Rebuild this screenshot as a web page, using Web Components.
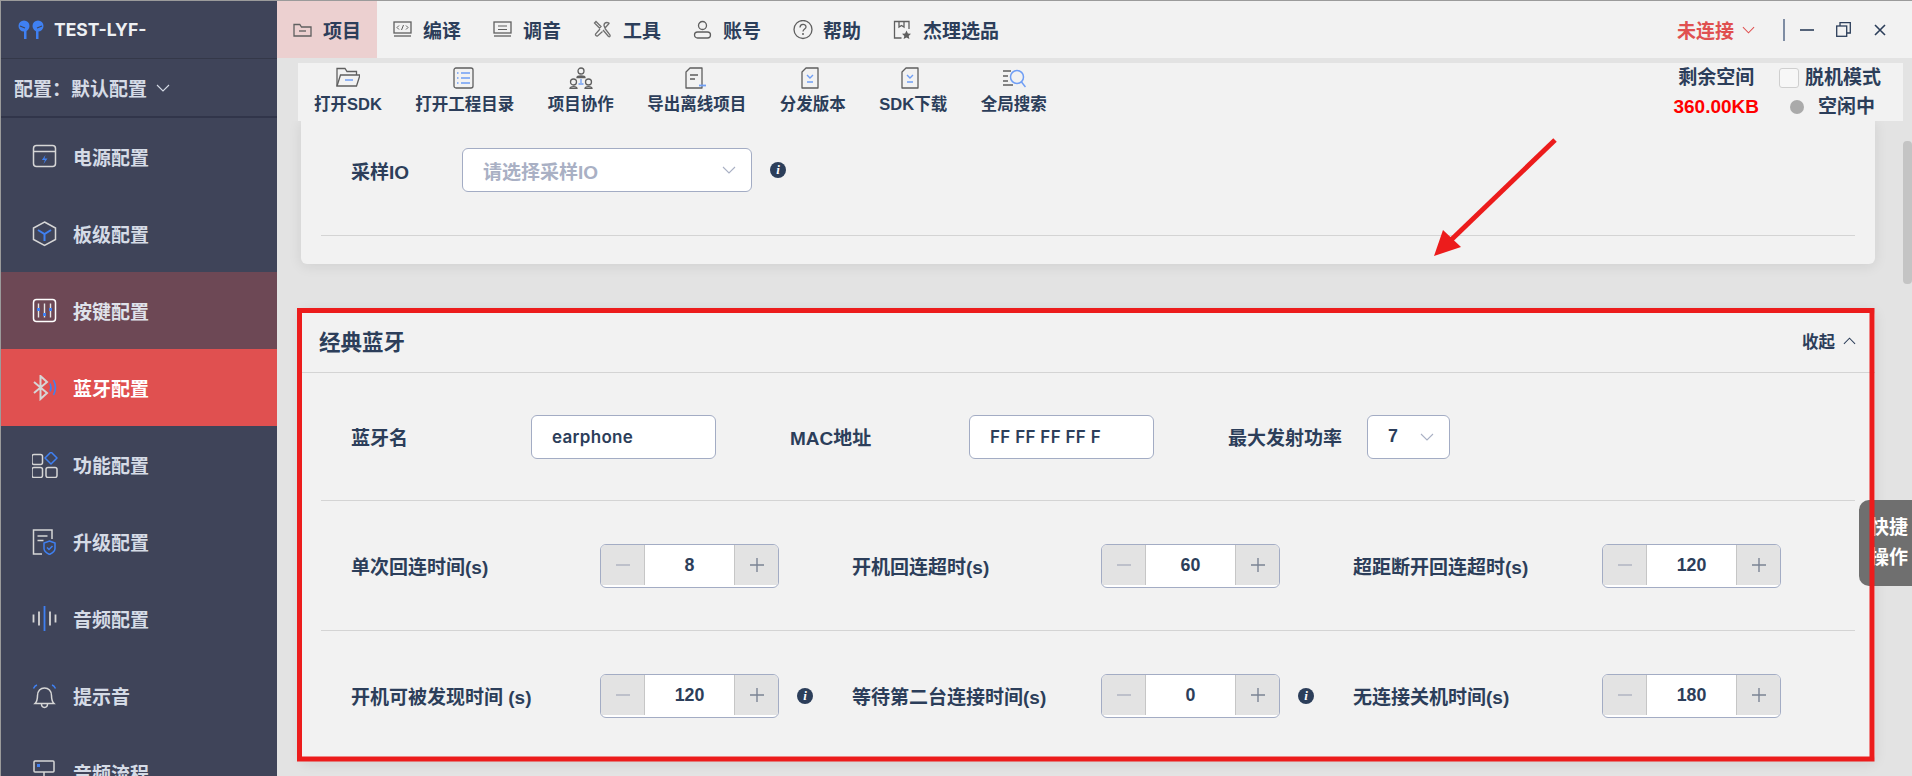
<!DOCTYPE html>
<html lang="zh-CN">
<head>
<meta charset="utf-8">
<title>TEST-LYF-</title>
<style>
  html, body { margin: 0; height: 100%; overflow: hidden; background: #e3e3e3; }
  body { font-family: "Liberation Sans", "Noto Sans CJK SC", sans-serif; color: #2c3e5a; }
</style>
</head>
<body>
<app-shell>
  <side-bar slot="side">
    <side-item icon="power">电源配置</side-item>
    <side-item icon="board">板级配置</side-item>
    <side-item icon="keys" state="hover">按键配置</side-item>
    <side-item icon="bluetooth" state="active">蓝牙配置</side-item>
    <side-item icon="func">功能配置</side-item>
    <side-item icon="upgrade">升级配置</side-item>
    <side-item icon="audio">音频配置</side-item>
    <side-item icon="bell">提示音</side-item>
    <side-item icon="flow" more>音频流程</side-item>
  </side-bar>

  <top-nav slot="top">
    <nav-tab icon="folder" active>项目</nav-tab>
    <nav-tab icon="code">编译</nav-tab>
    <nav-tab icon="tune">调音</nav-tab>
    <nav-tab icon="tools">工具</nav-tab>
    <nav-tab icon="user">账号</nav-tab>
    <nav-tab icon="help">帮助</nav-tab>
    <nav-tab icon="store">杰理选品</nav-tab>
  </top-nav>

  <tool-bar slot="tools">
    <tool-btn icon="open">打开SDK</tool-btn>
    <tool-btn icon="list">打开工程目录</tool-btn>
    <tool-btn icon="team">项目协作</tool-btn>
    <tool-btn icon="export">导出离线项目</tool-btn>
    <tool-btn icon="dist">分发版本</tool-btn>
    <tool-btn icon="dist">SDK下载</tool-btn>
    <tool-btn icon="search">全局搜索</tool-btn>
  </tool-bar>

  <work-area slot="work">
    <config-card cut>
      <form-row first-pad>
        <form-field label="采样IO" width="111"><select-box width="290" placeholder="请选择采样IO"></select-box><info-dot></info-dot></form-field>
      </form-row>
    </config-card>
    <config-card title="经典蓝牙">
      <form-row h="128" cols="439px 438px auto">
        <form-field label="蓝牙名" width="180"><text-box width="185">earphone</text-box></form-field>
        <form-field label="MAC地址" width="179"><text-box width="185">FF FF FF FF F</text-box></form-field>
        <form-field label="最大发射功率" width="139"><select-box width="83" value="7"></select-box></form-field>
      </form-row>
      <form-row>
        <form-field label="单次回连时间(s)" width="249"><num-stepper value="8"></num-stepper></form-field>
        <form-field label="开机回连超时(s)" width="249"><num-stepper value="60"></num-stepper></form-field>
        <form-field label="超距断开回连超时(s)" width="249"><num-stepper value="120"></num-stepper></form-field>
      </form-row>
      <form-row>
        <form-field label="开机可被发现时间 (s)" width="249"><num-stepper value="120"></num-stepper><info-dot></info-dot></form-field>
        <form-field label="等待第二台连接时间(s)" width="249"><num-stepper value="0"></num-stepper><info-dot></info-dot></form-field>
        <form-field label="无连接关机时间(s)" width="249"><num-stepper value="180"></num-stepper></form-field>
      </form-row>
    </config-card>
  </work-area>

  <quick-tab slot="over"></quick-tab>
  <red-markup slot="over"></red-markup>
</app-shell>

<script>
// stroke colours used by the two tone icons
const W = '#d6d6d6'
const B = '#3f80f2'
const G = '#5f5f5f'
const L = '#6f9ef5'

const sideIcons = {
  power: `<rect x="1.5" y="1.5" width="22" height="21" rx="3" stroke="${W}"/><path d="M1.5 7.5h22" stroke="${W}"/><path d="M13.5 11l-3.6 5h3l-1.4 4 4-5.4h-3z" fill="${B}"/>`,
  board: `<path d="M12.5 1L23.5 7v11.5L12.5 24.5 1.5 18.5V7z" stroke="${W}"/><path d="M6 9l6.5 4 6.5-4M12.5 13v7" stroke="${B}" stroke-width="2"/>`,
  keys: `<rect x="1.5" y="1.5" width="22" height="22" rx="3" stroke="#fff"/><path d="M6.5 5.5v14M12.5 5.5v14M18.5 5.5v14" stroke="#e6e6e6" stroke-width="1.4"/><rect x="5" y="10" width="3" height="3" fill="${B}"/><rect x="11" y="15" width="3" height="3" fill="${B}"/><rect x="17" y="10" width="3" height="3" fill="${B}"/>`,
  bluetooth: `<path d="M2 7l13 11-6.5 6V1L15 7 2 18" stroke="${W}" stroke-width="2"/><path d="M18 8.5c1.4 2.800 1.400 5.200 0 8" stroke="${B}" stroke-width="1.6"/><path d="M21.500 5c2.600 5 2.600 10 0 15" stroke="${B}" stroke-width="1.6"/>`,
  func: `<rect x="0" y="2.500" width="10.500" height="10" rx="2" stroke="${W}"/><path d="M19 0l6 6-6 6-6-6z" stroke="${B}" stroke-linejoin="round"/><rect x="0" y="15.500" width="10.500" height="10" rx="2" stroke="${W}"/><rect x="14" y="15.500" width="11" height="10" rx="2" stroke="${W}"/>`,
  upgrade: `<path d="M10 25H1.500V1H20v9" stroke="${W}"/><path d="M5.500 7h10M5.500 11.500h6" stroke="${W}"/><path d="M17.500 12l5.500 2v5.500c0 2.500-2.500 4.500-5.500 6-3-1.500-5.500-3.500-5.500-6V14z" stroke="${B}"/><path d="M15 18.500l2 2 3.500-3.500" stroke="${B}"/>`,
  audio: `<path d="M1.500 8.500v8M7 5.500v14M18 5.500v14M23.500 8.500v8" stroke="${W}" stroke-width="1.800"/><path d="M12.500 0v25" stroke="${B}" stroke-width="1.800"/>`,
  bell: `<path d="M3 20.500c2-2 2.500-4 2.500-8 0-4.500 3-7.500 7-7.500s7 3 7 7.500c0 4 .5 6 2.500 8z" stroke="${W}"/><path d="M9.500 21c0 4.500 6 4.500 6 0" stroke="${W}"/><path d="M1.500 5.500C2.500 3.500 3.500 2.500 5 2M20 2c1.500.5 2.500 1.500 3.500 3.500" stroke="${B}"/>`,
  flow: `<rect x="2" y="1" width="20" height="11" rx="1" stroke="${W}"/><rect x="5" y="4" width="3" height="3" fill="${B}"/><path d="M12 12v6M3 18.500h18" stroke="${W}"/>`
}

const topIcons = {
  folder: `<path d="M1 4.500V16h17V7H8.500L6.800 4.500z" stroke="${G}"/><path d="M6 11h7" stroke="${G}"/>`,
  code: `<rect x="1" y="2" width="17" height="11" stroke="${G}"/><path d="M6 5.500l-2 2 2 2M13 5.500l2 2-2 2M10.500 5l-2 5" stroke="${G}" stroke-width="1"/><path d="M1 16h17" stroke="${G}"/>`,
  tune: `<rect x="1" y="2" width="17" height="11" stroke="${G}"/><path d="M5 6h9M5 9.500h9" stroke="${G}" stroke-width="1"/><path d="M1 16h17" stroke="${G}"/>`,
  tools: `<path d="M3 1.500l5 5-1.500 1.500-5-5zM7 9l-4.500 5c-.5 1 1 2.500 2 2L9.500 11.500M12 8l4-4.500c.5-.5-1-1-2-1-2 0-3 1.500-3 3zM10 10l5.500 6.500c1 .8 2-.2 1.500-1.500L12 8.500" stroke="#707070"/>`,
  user: `<circle cx="9.500" cy="5.500" r="4" stroke="${G}"/><rect x="1.500" y="12" width="16" height="6" rx="3" stroke="${G}"/>`,
  help: `<circle cx="10" cy="9.500" r="9" stroke="${G}"/><path d="M7 7.500c0-4 6-4 6-.5 0 2-3 2-3 4.500" stroke="${G}"/><circle cx="10" cy="14" r="1" fill="${G}"/>`,
  store: `<path d="M16 9V1.500H1.500V18h7" stroke="${G}"/><path d="M6 1.500V7l2.500-1.500L11 7V1.500" stroke="${G}"/><path d="M13.500 10.500l1.400 3 3.100.3-2.300 2.100.7 3.100-2.900-1.600-2.900 1.600.7-3.100-2.300-2.100 3.100-.3z" fill="${G}"/>`
}

const toolIcons = {
  open: `<path d="M1 19V1.500h8l2 3h9.500V8" stroke="${G}"/><path d="M1 19L4.500 8H24l-3.500 11z" stroke="${G}"/><path d="M9 13h8" stroke="${L}" stroke-width="1.500"/>`,
  list: `<rect x="1" y="1" width="19" height="20" rx="2" stroke="${G}"/><path d="M8 6h9M8 11h9M8 16h9" stroke="${L}"/><path d="M4 6h1.500M4 11h1.500M4 16h1.500" stroke="${L}" stroke-width="1.400"/>`,
  team: `<circle cx="12" cy="4" r="3" stroke="${G}"/><path d="M8 10.500c0-2 8-2 8 0z" stroke="${G}"/><circle cx="4.500" cy="15" r="3" stroke="${G}"/><path d="M1 21.500c0-2.500 7-2.500 7 0z" stroke="${G}"/><circle cx="19.500" cy="15" r="3" stroke="${G}"/><path d="M16 21.500c0-2.500 7-2.500 7 0z" stroke="${G}"/><path d="M12 12v4M9.500 17h5" stroke="${L}"/>`,
  export: `<path d="M5 1h12v20H1V5z" stroke="${G}" stroke-linejoin="round"/><path d="M5 8h8M5 12h5" stroke="${G}"/><path d="M14 18.500h7" stroke="${L}" stroke-width="1.800"/>`,
  dist: `<path d="M5 1h12v20H1V5z" stroke="${G}" stroke-linejoin="round"/><path d="M6 8l3 3 3-3M6 15h6" stroke="${L}" stroke-width="1.400"/>`,
  search: `<path d="M1 4h8M1 9h5M1 14h5M1 18h10" stroke="${G}"/><circle cx="15" cy="10" r="6.500" stroke="${L}" stroke-width="1.500"/><path d="M19.500 15l4 5" stroke="${L}" stroke-width="1.500"/>`
}

const chevron = (size, color, up) => `<svg width="${size}" height="${Math.round(size * .6)}" viewBox="0 0 14 8" fill="none"><path d="${up ? 'M1 7l6-6 6 6' : 'M1 1l6 6 6-6'}" stroke="${color}" stroke-width="1.100"/></svg>`

class AppShell extends HTMLElement {
  constructor() {
    super()
    this.attachShadow({mode: 'open'})
    this.shadowRoot.innerHTML = `
    <style>
      :host { display: grid; grid-template-columns: 276px 1fr; grid-template-rows: 58px 4px 58px 1fr;
        width: 1912px; height: 776px; overflow: hidden; position: relative; background: #e3e3e3;
        border-top: 1px solid #9b9b9b; border-left: 1px solid #9b9b9b; box-sizing: border-box; }
      ::slotted([slot=side]) { grid-row: 1 / 5; }
      ::slotted([slot=top]) { grid-column: 2; grid-row: 1; }
      ::slotted([slot=tools]) { grid-column: 2; grid-row: 3; margin: 0 9px 0 21px; }
      ::slotted([slot=work]) { grid-column: 2; grid-row: 4; min-height: 0; }
    </style>
    <slot name="side"></slot><slot name="top"></slot><slot name="tools"></slot><slot name="work"></slot><slot name="over"></slot>`
  }
}

class SideBar extends HTMLElement {
  constructor() {
    super()
    this.attachShadow({mode: 'open'})
    this.shadowRoot.innerHTML = `
    <style>
      :host { display: block; background: #3f4459; color: #d5dbe6; overflow: hidden; font-weight: 700; font-size: 19px; min-height: 0; }
      .brand { height: 57px; display: flex; align-items: center; gap: 9px; padding-left: 17px; border-bottom: 1px solid #343849; color: #eef0f3; font: 700 17.5px Inter, "Liberation Sans", sans-serif; }
      .conf { height: 57px; display: flex; align-items: center; padding-left: 13px; gap: 9px; border-bottom: 2px solid #31354a; }
    </style>
    <div class="brand">
      <svg width="27" height="20" viewBox="0 0 27 20"><circle cx="6" cy="6" r="5.500" fill="#3f80f2"/><circle cx="20" cy="6" r="5.500" fill="#3f80f2"/><rect x="6" y="8" width="2.500" height="11" fill="#3f80f2"/><rect x="18" y="8" width="2.500" height="11" fill="#3f80f2"/><path d="M2 6l5 2M24 6l-5 2" stroke="#3f4459" stroke-width="1.200"/></svg>
      <span>TEST-LYF-</span>
    </div>
    <div class="conf"><span>配置：默认配置</span>${chevron(14, '#d5dbe6')}</div>
    <slot></slot>`
  }
}

class SideItem extends HTMLElement {
  constructor() {
    super()
    this.attachShadow({mode: 'open'})
    const more = this.hasAttribute('more') ? `<span class="more">${chevron(14, '#e8e8e8')}</span>` : ''
    this.shadowRoot.innerHTML = `
    <style>
      :host { display: flex; align-items: center; height: 77px; padding-left: 31px; gap: 15px; position: relative; }
      :host([state=hover]) { background: #6d4855; color: #dfe2ea; }
      :host([state=active]) { background: #e05050; color: #fff; }
      svg.i { width: 26px; height: 26px; fill: none; stroke-width: 1.500; flex: none; }
      .more { position: absolute; right: 9px; top: 34px; }
    </style>
    <svg class="i" viewBox="0 0 26 26">${sideIcons[this.getAttribute('icon')]}</svg><slot></slot>${more}`
  }
}

class TopNav extends HTMLElement {
  constructor() {
    super()
    this.attachShadow({mode: 'open'})
    this.shadowRoot.innerHTML = `
    <style>
      :host { display: flex; background: #f2f2f2; height: 57px; align-items: stretch; }
      .right { margin-left: auto; display: flex; align-items: center; padding-right: 25px; }
      .st { color: #e05050; font-weight: 700; font-size: 19px; display: flex; align-items: center; gap: 8px; }
      .sep { width: 2px; height: 22px; background: #7f8da3; margin: 0 15px 0 28px; }
      .win { display: flex; align-items: center; gap: 22px; }
      svg { display: block; }
    </style>
    <slot></slot>
    <div class="right">
      <div class="st">未连接${chevron(13, '#e05050')}</div>
      <div class="sep"></div>
      <div class="win">
        <svg width="14" height="14" viewBox="0 0 14 14"><path d="M0 7h14" stroke="#2c3e5a" stroke-width="1.600"/></svg>
        <svg width="15" height="15" viewBox="0 0 15 15" fill="none" stroke="#2c3e5a" stroke-width="1.300"><rect x=".7" y="4" width="10" height="10.300"/><path d="M4 4V.7h10.300V11H11"/></svg>
        <svg width="14" height="14" viewBox="0 0 14 14"><path d="M2 2l10 10M12 2L2 12" stroke="#2c3e5a" stroke-width="1.600"/></svg>
      </div>
    </div>`
  }
}

class NavTab extends HTMLElement {
  constructor() {
    super()
    this.attachShadow({mode: 'open'})
    this.shadowRoot.innerHTML = `
    <style>
      :host { display: flex; align-items: center; gap: 10px; padding: 0 16px; width: auto; font-weight: 700; font-size: 19px; color: #2c3e5a; }
      :host([active]) { background: #ecd0d0; }
      svg { width: 20px; height: 20px; fill: none; stroke-width: 1.300; flex: none; }
    </style>
    <svg viewBox="0 0 20 20">${topIcons[this.getAttribute('icon')]}</svg><slot></slot>`
  }
}

class ToolBar extends HTMLElement {
  constructor() {
    super()
    this.attachShadow({mode: 'open'})
    this.shadowRoot.innerHTML = `
    <style>
      :host { display: flex; background: #f2f2f2; padding-left: 16px; gap: 33.500px; height: 58px; }
      .status { margin-left: auto; margin-right: 20px; display: grid; grid-template-columns: auto 104px; column-gap: 20px; align-items: center; font-weight: 700; font-size: 19px; line-height: 29px; padding-top: 0; text-align: center; }
      .free { color: #f00; font-family: "Liberation Sans", sans-serif; }
      .off { display: flex; align-items: center; gap: 6px; }
      .box { width: 18px; height: 18px; background: #f7f7f7; border: 1px solid #cfcfcf; border-radius: 3px; }
      .idle { display: flex; align-items: center; gap: 14px; padding-left: 11px; }
      .dot { width: 14px; height: 14px; border-radius: 50%; background: #aaa; }
    </style>
    <slot></slot>
    <div class="status">
      <span>剩余空间</span><span class="off"><i class="box"></i>脱机模式</span>
      <span class="free">360.00KB</span><span class="idle"><i class="dot"></i>空闲中</span>
    </div>`
  }
}

class ToolBtn extends HTMLElement {
  constructor() {
    super()
    this.attachShadow({mode: 'open'})
    this.shadowRoot.innerHTML = `
    <style>
      :host { display: flex; flex-direction: column; align-items: center; font-weight: 700; font-size: 16.500px; line-height: 24px; white-space: nowrap; color: #2c3e5a; }
      svg { width: 24px; height: 22px; margin-top: 4px; margin-bottom: 3px; fill: none; stroke-width: 1.300; }
    </style>
    <svg viewBox="0 0 24 22">${toolIcons[this.getAttribute('icon')]}</svg><slot></slot>`
  }
}

class WorkArea extends HTMLElement {
  constructor() {
    super()
    this.attachShadow({mode: 'open'})
    this.shadowRoot.innerHTML = `
    <style>
      :host { display: flex; flex-direction: column; gap: 45px; padding-left: 24px; overflow: hidden; position: relative; }
      .thumb { position: absolute; right: 0; top: 20px; width: 9px; height: 143px; border-radius: 4px; background: #c4c4c4; }
    </style>
    <slot></slot><div class="thumb"></div>`
  }
}

class ConfigCard extends HTMLElement {
  constructor() {
    super()
    this.attachShadow({mode: 'open'})
    const title = this.getAttribute('title')
    const head = title ? `<div class="head"><h3>${title}</h3><span class="fold">收起${chevron(13, '#2c3e5a', true)}</span></div>` : ''
    this.shadowRoot.innerHTML = `
    <style>
      :host { display: block; flex: none; width: 1574px; background: #f2f2f2; border-radius: 6px; box-shadow: 0 2px 14px rgba(0,0,0,.09); }
      :host([cut]) { border-radius: 0 0 6px 6px; height: 143px; }
      .head { height: 63px; display: flex; align-items: center; justify-content: space-between; padding: 0 19px 0 18px; border-bottom: 1px solid #d4d4d4; }
      h3 { margin: 0; font-size: 21.500px; font-weight: 700; }
      .fold { display: flex; align-items: center; gap: 8px; font-size: 16.500px; font-weight: 700; }
      .body { padding: 0 20px; }
    </style>
    ${head}<div class="body"><slot></slot></div>`
  }
}

class FormRow extends HTMLElement {
  constructor() {
    super()
    this.attachShadow({mode: 'open'})
    const cols = this.getAttribute('cols') || 'repeat(3, 501px)'
    const h = this.getAttribute('h') || 130
    const first = this.hasAttribute('first-pad')
    this.shadowRoot.innerHTML = `
    <style>
      :host { display: grid; grid-template-columns: ${cols}; align-items: ${first ? 'start' : 'center'}; box-sizing: content-box;
        height: ${first ? 88 : h - 1}px; padding: ${first ? '27px' : 0} 0 0 30px; border-bottom: 1px solid #d4d4d4; }
    </style>
    <slot></slot>`
    if (first) this.style.height = '87px'
  }
}

class FormField extends HTMLElement {
  constructor() {
    super()
    this.attachShadow({mode: 'open'})
    this.shadowRoot.innerHTML = `
    <style>
      :host { display: flex; align-items: center; font-size: 19px; font-weight: 700; color: #2c3e5a; }
      .lbl { width: ${this.getAttribute('width')}px; flex: none; white-space: nowrap; }
    </style>
    <span class="lbl">${this.getAttribute('label')}</span><slot></slot>`
  }
}

class TextBox extends HTMLElement {
  constructor() {
    super()
    this.attachShadow({mode: 'open'})
    this.shadowRoot.innerHTML = `
    <style>
      :host { display: flex; align-items: center; box-sizing: border-box; width: ${this.getAttribute('width')}px; height: 44px; padding-left: 20px;
        background: #fff; border: 1px solid #a3acc4; border-radius: 6px; font: 600 17px Inter, "Liberation Sans", sans-serif; color: #2c3e5a; letter-spacing: .3px; }
    </style>
    <slot></slot>`
  }
}

class SelectBox extends HTMLElement {
  constructor() {
    super()
    this.attachShadow({mode: 'open'})
    const ph = this.getAttribute('placeholder')
    this.shadowRoot.innerHTML = `
    <style>
      :host { display: flex; align-items: center; justify-content: space-between; box-sizing: border-box; width: ${this.getAttribute('width')}px; height: 44px; padding: 0 15px 0 20px;
        background: #fff; border: 1px solid #a3acc4; border-radius: 6px; font-size: 17.800px; font-weight: 700; }
      .ph { color: #a9b0c4; font-size: 19px; }
      .v { color: #2c3e5a; }
    </style>
    <span class="${ph ? 'ph' : 'v'}">${ph || this.getAttribute('value')}</span>${chevron(14, '#a9b0c4')}`
  }
}

class NumStepper extends HTMLElement {
  constructor() {
    super()
    this.attachShadow({mode: 'open'})
    this.shadowRoot.innerHTML = `
    <style>
      :host { display: grid; grid-template-columns: 44px 1fr 44px; box-sizing: border-box; width: 179px; height: 44px; flex: none;
        background: #fff; border: 1px solid #a3acc4; border-radius: 6px; overflow: hidden; font-size: 17.800px; font-weight: 700; }
      .b { background: #e3e3e3; margin-bottom: 2px; display: flex; align-items: center; justify-content: center; }
      .m { border-right: 1px solid #c6c6c6; }
      .p { border-left: 1px solid #c6c6c6; }
      .n { display: flex; align-items: center; justify-content: center; color: #2c3e5a; font-family: "Liberation Sans", sans-serif; }
    </style>
    <div class="b m"><svg width="14" height="14" viewBox="0 0 14 14"><path d="M0 7h14" stroke="#b0b5c2" stroke-width="1.400"/></svg></div>
    <div class="n">${this.getAttribute('value')}</div>
    <div class="b p"><svg width="14" height="14" viewBox="0 0 14 14"><path d="M0 7h14M7 0v14" stroke="#7b8494" stroke-width="1.400"/></svg></div>`
  }
}

class InfoDot extends HTMLElement {
  constructor() {
    super()
    this.attachShadow({mode: 'open'})
    this.shadowRoot.innerHTML = `
    <style>
      :host { display: flex; align-items: center; justify-content: center; width: 16px; height: 16px; margin-left: 18px; flex: none; border-radius: 50%;
        background: #2c3e5a; color: #fff; font: italic 700 13px "Liberation Serif", serif; line-height: 16px; }
    </style>
    i`
  }
}

class QuickTab extends HTMLElement {
  constructor() {
    super()
    this.attachShadow({mode: 'open'})
    this.shadowRoot.innerHTML = `
    <style>
      :host { position: absolute; right: 0; top: 499px; width: 53px; height: 86px; box-sizing: border-box; padding-left: 11px; background: #6f6f6f; border-radius: 10px 0 0 10px;
        color: #fff; font-size: 19px; font-weight: 700; line-height: 30px; display: flex; align-items: center; }
    </style>
    <div>快捷<br>操作</div>`
  }
}

// the red box and arrow somebody drew on top of the screenshot
class RedMarkup extends HTMLElement {
  constructor() {
    super()
    this.attachShadow({mode: 'open'})
    this.shadowRoot.innerHTML = `
    <style>
      :host { position: absolute; left: -1px; top: -1px; width: 1912px; height: 776px; pointer-events: none; }
      svg { display: block; }
    </style>
    <svg width="1912" height="776" viewBox="0 0 1912 776" fill="none">
      <rect x="299.500" y="310.500" width="1572.500" height="448.500" stroke="#ec1c1c" stroke-width="5"/>
      <path d="M1555 140L1450 241" stroke="#ec1c1c" stroke-width="5"/>
      <path d="M1434 256L1443 230L1461 247z" fill="#ec1c1c"/>
    </svg>`
  }
}

window.customElements.define('app-shell', AppShell)
window.customElements.define('side-bar', SideBar)
window.customElements.define('side-item', SideItem)
window.customElements.define('top-nav', TopNav)
window.customElements.define('nav-tab', NavTab)
window.customElements.define('tool-bar', ToolBar)
window.customElements.define('tool-btn', ToolBtn)
window.customElements.define('work-area', WorkArea)
window.customElements.define('config-card', ConfigCard)
window.customElements.define('form-row', FormRow)
window.customElements.define('form-field', FormField)
window.customElements.define('text-box', TextBox)
window.customElements.define('select-box', SelectBox)
window.customElements.define('num-stepper', NumStepper)
window.customElements.define('info-dot', InfoDot)
window.customElements.define('quick-tab', QuickTab)
window.customElements.define('red-markup', RedMarkup)
</script>
</body>
</html>
